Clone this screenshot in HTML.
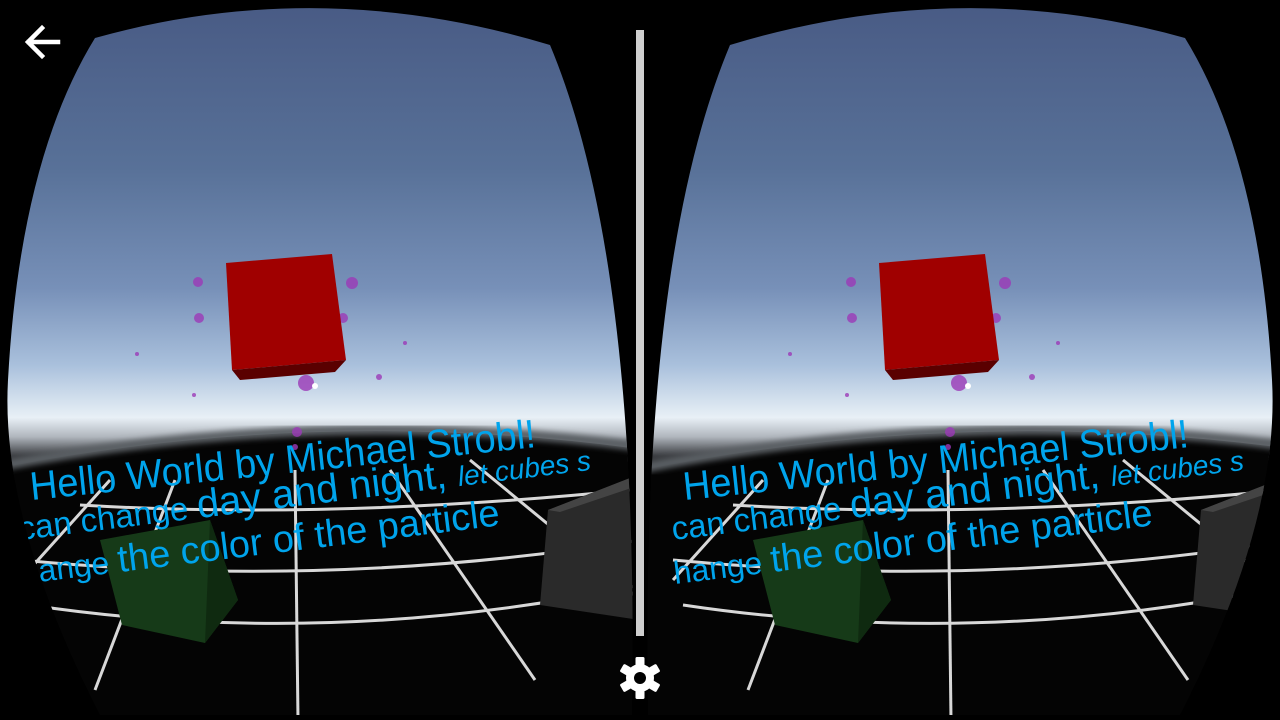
<!DOCTYPE html>
<html><head><meta charset="utf-8"><style>
html,body{margin:0;padding:0;background:#000;width:1280px;height:720px;overflow:hidden}
svg{display:block}
</style></head><body>
<svg width="1280" height="720" viewBox="0 0 1280 720" xmlns="http://www.w3.org/2000/svg">
<defs>
<linearGradient id="sky" gradientUnits="userSpaceOnUse" x1="0" y1="0" x2="0" y2="480">
<stop offset="0" stop-color="#485a84"/>
<stop offset="0.35" stop-color="#587198"/>
<stop offset="0.6" stop-color="#7790b8"/>
<stop offset="0.76" stop-color="#a9c0dc"/>
<stop offset="0.87" stop-color="#e8f0f6"/>
<stop offset="0.91" stop-color="#b0b6bd"/>
<stop offset="0.95" stop-color="#3a3c40"/>
<stop offset="1" stop-color="#080808"/>
</linearGradient>
<clipPath id="cl"><path d="M95,38 Q320,-25 550,45 Q640,260 632,715 L100,715 Q0,520 8,380 Q20,160 95,38Z"/></clipPath>
<clipPath id="cr"><path transform="translate(1280,0) scale(-1,1)" d="M95,38 Q320,-25 550,45 Q640,260 632,715 L100,715 Q0,520 8,380 Q20,160 95,38Z"/></clipPath>
<filter id="bl"><feGaussianBlur stdDeviation="3"/></filter>
<g id="scene">
<path d="M-20,-20 L680,-20 L680,470 Q330,410 -20,490Z" fill="url(#sky)"/>
<path d="M-20,472 Q330,400 680,455 L680,720 L-20,720Z" fill="#040404"/>
<path d="M-20,470 Q330,400 680,452" stroke="#5a5e64" stroke-width="10" fill="none" filter="url(#bl)"/>
<g stroke="#d8d8d8" stroke-width="3" fill="none">
<path d="M30,605 Q330,650 640,585"/>
<path d="M20,560 Q330,590 640,540"/>
<path d="M80,505 Q330,520 630,490"/>
<path d="M295,470 L298,720"/>
<path d="M175,480 L95,690"/>
<path d="M390,470 L535,680"/>
<path d="M470,460 L640,600"/>
<path d="M110,480 L20,580"/>
</g>
<g fill="#9c3ab8" opacity="0.8">
<circle cx="198" cy="282" r="5"/><circle cx="199" cy="318" r="5"/><circle cx="352" cy="283" r="6"/>
<circle cx="343" cy="318" r="5"/><circle cx="306" cy="383" r="8"/><circle cx="379" cy="377" r="3"/>
<circle cx="297" cy="432" r="5"/><circle cx="137" cy="354" r="2"/><circle cx="405" cy="343" r="2"/>
<circle cx="194" cy="395" r="2"/><circle cx="295" cy="447" r="3"/>
</g>
<circle cx="315" cy="386" r="3" fill="#fff"/>
<polygon points="226,263 332,254 346,360 232,370" fill="#a00000"/>
<polygon points="232,370 346,360 335,372 240,380" fill="#5a0000"/>
<polygon points="100,540 210,520 238,600 205,643 122,625" fill="#163a18"/>
<polygon points="210,520 238,600 205,643" fill="#0f2a10"/>
<polygon points="548,510 630,478 640,480 640,620 540,605" fill="#2a2a2a"/>
<polygon points="548,510 630,478 640,485 560,512" fill="#444"/>
<g fill="#00a4ec" font-family="Liberation Sans, sans-serif">
<text x="33" y="500" font-size="40" transform="rotate(-6 33 500) scale(0.95 1)">Hello World by Michael Strobl!</text>
<text x="20" y="540" font-size="40" transform="rotate(-7 20 540)"><tspan font-size="33">can change </tspan>day and night, <tspan font-size="28" font-style="italic">let cubes s</tspan></text>
<text x="22" y="584" font-size="38" transform="rotate(-7 22 584)"><tspan font-size="32">hange </tspan>the color of the particle</text>
</g>
</g>
</defs>
<rect width="1280" height="720" fill="#000"/>
<g clip-path="url(#cl)"><use href="#scene"/></g>
<g clip-path="url(#cr)"><use href="#scene" transform="translate(653,0)"/></g>
<rect x="636" y="30" width="8" height="606" fill="#cfcfcf"/>
<path d="M58,42 H29 M42,28 L28,42 L42,56" stroke="#fff" stroke-width="4.5" fill="none" stroke-linecap="square"/>
<g transform="translate(640,678)">
<g fill="#fff">
<circle r="14"/>
<rect x="-4.5" y="-21" width="9" height="42" rx="1.5"/>
<rect x="-4.5" y="-21" width="9" height="42" rx="1.5" transform="rotate(60)"/>
<rect x="-4.5" y="-21" width="9" height="42" rx="1.5" transform="rotate(120)"/>
</g>
<circle r="6" fill="#000"/>
</g>
</svg>
</body></html>
